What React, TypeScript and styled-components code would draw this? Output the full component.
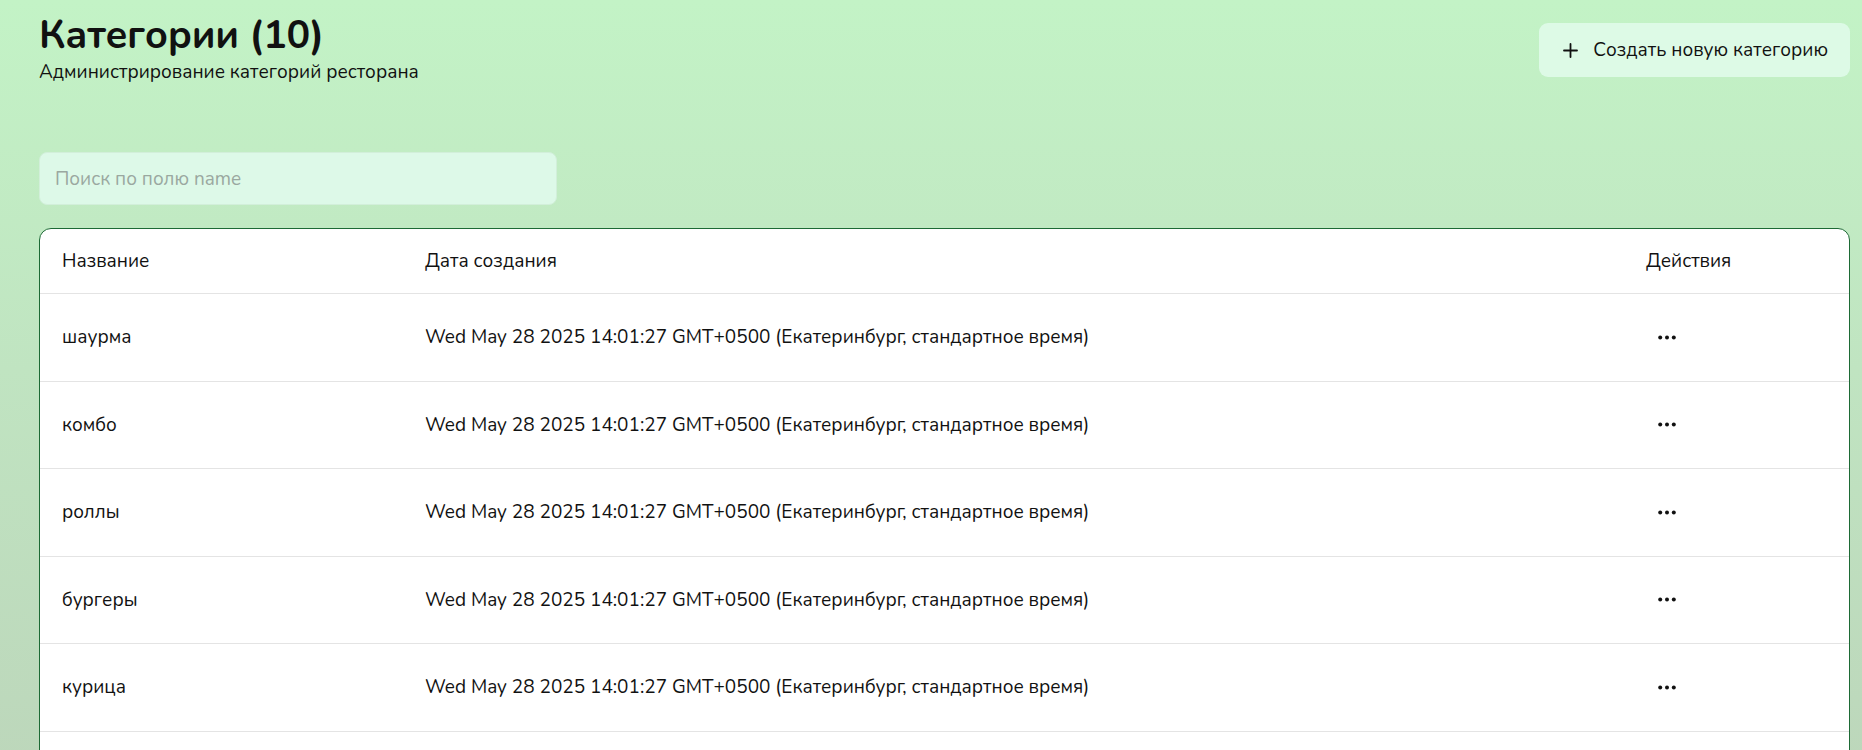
import styled, { createGlobalStyle } from 'styled-components';

const GlobalStyle = createGlobalStyle`
  html, body {
    margin: 0;
    padding: 0;
  }
  body {
    font-family: 'Nunito', 'Lato', 'Noto Sans', sans-serif;
    color: #111;
    background: linear-gradient(180deg, #c3f3c6 0%, #c0e4c1 45%, #bcd5ba 100%);
    min-height: 750px;
    overflow: hidden;
  }
`;

const CATEGORIES = ['шаурма', 'комбо', 'роллы', 'бургеры', 'курица', 'напитки'];
const CREATED = 'Wed May 28 2025 14:01:27 GMT+0500 (Екатеринбург, стандартное время)';

const PlusIcon = () => (
  <svg width="15" height="15" viewBox="0 0 15 15" fill="none" stroke="#111" strokeWidth="1.8" strokeLinecap="round">
    <path d="M1 7.5h13M7.5 1v13" />
  </svg>
);

const DotsIcon = () => (
  <svg width="18" height="5" viewBox="0 0 18 5" fill="#111">
    <circle cx="2.2" cy="2.5" r="2" />
    <circle cx="9" cy="2.5" r="2" />
    <circle cx="15.8" cy="2.5" r="2" />
  </svg>
);

const App = () => (
  <>
    <GlobalStyle />
    <Page>
      <Header>
        <TitleBox>
          <Title>Категории (10)</Title>
          <Subtitle>Администрирование категорий ресторана</Subtitle>
        </TitleBox>
        <CreateBtn>
          <PlusIcon />
          Создать новую категорию
        </CreateBtn>
      </Header>

      <SearchInput placeholder="Поиск по полю name" />

      <TableBox>
        <HeadRow>
          <Cell>Название</Cell>
          <Cell>Дата создания</Cell>
          <Cell>Действия</Cell>
        </HeadRow>
        {CATEGORIES.map((name) => (
          <Row key={name}>
            <Cell>{name}</Cell>
            <Cell>{CREATED}</Cell>
            <Cell>
              <ActionBtn>
                <DotsIcon />
              </ActionBtn>
            </Cell>
          </Row>
        ))}
      </TableBox>
    </Page>
  </>
);

export default App;

const Page = styled.div`
  display: flex;
  flex-direction: column;
  padding: 12px 12px 0 39px;
`;

const Header = styled.div`
  display: flex;
  justify-content: space-between;
  align-items: flex-start;
`;

const TitleBox = styled.div`
  display: flex;
  flex-direction: column;
`;

const Title = styled.h1`
  margin: 0;
  font-size: 39.5px;
  font-weight: 700;
  line-height: 46px;
  letter-spacing: -0.3px;
`;

const Subtitle = styled.div`
  font-size: 19px;
  line-height: 24px;
  margin-top: 2px;
`;

const CreateBtn = styled.button`
  display: flex;
  align-items: center;
  gap: 15px;
  height: 54px;
  margin-top: 11px;
  padding: 0 22px 0 24px;
  border: none;
  border-radius: 9px;
  background: #ddfae6;
  font-family: inherit;
  font-size: 19px;
  color: #111;
  cursor: pointer;
`;

const SearchInput = styled.input`
  box-sizing: border-box;
  width: 518px;
  height: 53px;
  margin-top: 68px;
  padding: 0 15px;
  border: 1px solid #d2efda;
  border-radius: 8px;
  background: #ddf9e8;
  font-family: inherit;
  font-size: 19px;
  outline: none;
  &::placeholder {
    color: #9aa8a0;
  }
`;

const TableBox = styled.div`
  margin-top: 23px;
  background: #fff;
  border: 1px solid #1d6a35;
  border-radius: 12px;
  overflow: hidden;
`;

const HeadRow = styled.div`
  display: grid;
  grid-template-columns: 363px 1fr 225px;
  align-items: center;
  height: 64px;
  border-bottom: 1px solid #e4e4e4;
  font-size: 19px;
`;

const Row = styled(HeadRow)`
  height: 86.5px;
`;

const Cell = styled.div`
  padding: 0 22px;
  white-space: nowrap;
`;

const ActionBtn = styled.button`
  display: flex;
  align-items: center;
  justify-content: center;
  width: 42px;
  height: 36px;
  padding: 0;
  border: none;
  background: transparent;
  cursor: pointer;
`;
